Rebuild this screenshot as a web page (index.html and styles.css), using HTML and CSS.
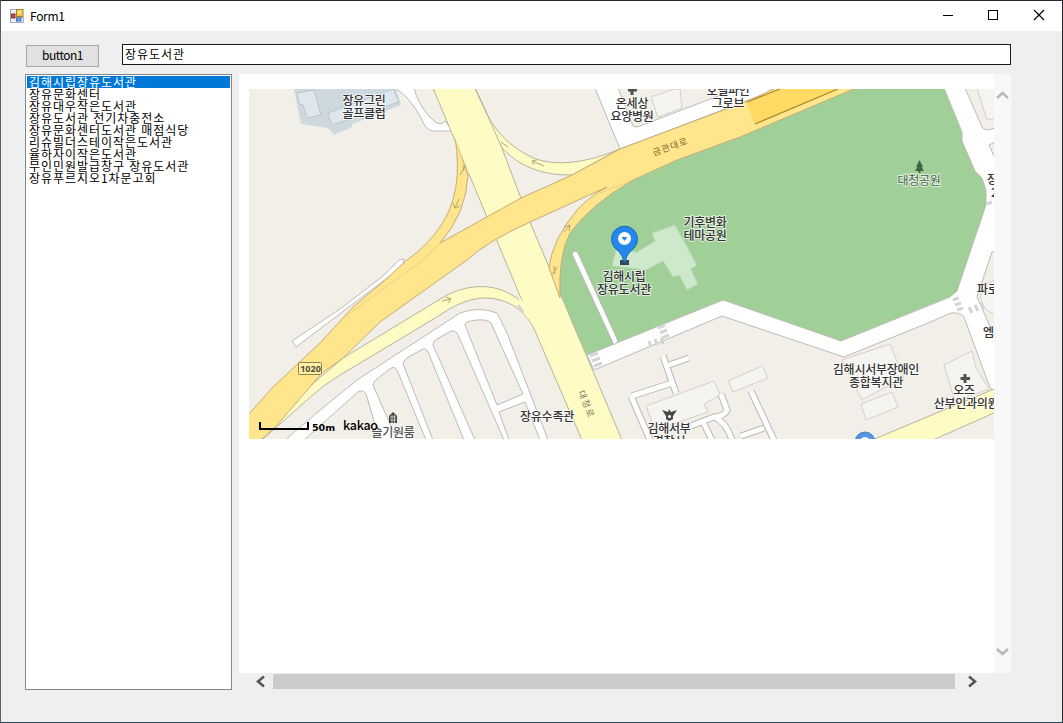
FILE: index.html
```html
<!DOCTYPE html>
<html lang="ko">
<head>
<meta charset="utf-8">
<title>Form1</title>
<link rel="stylesheet" href="styles.css">
</head>
<body>
<main class="window">
  <header class="titlebar">
    <svg class="app-icon" width="14" height="14" viewBox="0 0 14 14">
      <rect x=".5" y=".5" width="6" height="13" fill="#f0f1f4" stroke="#a9adb7"/>
      <rect x="7" y="8.5" width="6.5" height="5" fill="#e8edf5" stroke="#a9b2c4"/>
      <rect x="1.500" y="5" width="3.500" height="4" fill="#b5524e" stroke="#8f2d2b"/>
      <rect x="6.500" y=".5" width="6.500" height="7" fill="#f6ca3d" stroke="#a78423"/>
      <rect x="7.500" y="1.500" width="4" height="3" fill="#ffe58a"/>
      <rect x="6.500" y="9" width="4.500" height="3" fill="#6b9bd8" stroke="#4576b9"/>
    </svg>
    <h1 class="title">Form1</h1>
    <nav class="controls">
      <svg width="46" height="30" viewBox="0 0 46 30"><path class="control-line" d="M19 14.500h10"/></svg>
      <svg width="46" height="30" viewBox="0 0 46 30"><rect class="control-line" x="18.500" y="9.500" width="9" height="9"/></svg>
      <svg width="46" height="30" viewBox="0 0 46 30"><path class="control-line smooth" d="M18 9l10 10M28 9L18 19"/></svg>
    </nav>
  </header>
  <div class="client">
    <div class="searchbar">
      <button class="button">button1</button>
      <input class="query" type="text" value="장유도서관">
    </div>
    <div class="content">
      <ul class="results">
        <li class="selected">김해시립장유도서관</li>
        <li>장유문화센터</li>
        <li>장유대우작은도서관</li>
        <li>장유도서관 전기차충전소</li>
        <li>장유문화센터도서관 매점식당</li>
        <li>리슈빌더스테이작은도서관</li>
        <li>율하자이작은도서관</li>
        <li>무인민원발급창구 장유도서관</li>
        <li>장유푸르지오1차문고회</li>
      </ul>
      <section class="browser">
        <div class="view">
          <div class="page">
            <svg class="map" width="745" height="350" viewBox="249 89 745 350">
              <rect x="249" y="89" width="745" height="350" fill="#f2efe9"/>

              <!-- golf club -->
              <path fill="#cdd8df" d="M294 89H396L401 105 368 118 352 124V127L334 135 328 128 301 124Z"/>
              <path class="blue-building" d="M297 93L314 90 321 115 307 118 303 105 299 104Z"/>
              <path class="blue-building" d="M328 113L393 89 399 102 332 125Z"/>

              <!-- park -->
              <path fill="#a0d098" d="M853 89H944L962 132V141L975 171 982 178 986 190V205L969 257 957 291 950 297 841 341 723 300 587 355 560 298Q558 255 570 233 590 205 633 180L677 160Z"/>
              <path class="pale-building" d="M612 266L616 250 637 252 655 241 652 233 675 225 697 265 691 269 698 284 687 290 679 275 673 277 663 261 646 270Z"/>

              <!-- white roads -->
              <path class="white-road" d="M944 88H995V396L989 385 964 317Q960 312 951 313L928 323 844 357 722 316 594 370 587 355 723 300 841 341 950 297 957 291 986 205V190L982 178 975 171 962 141V132Z"/>
              <path class="block" d="M965 88L982 127Q985 132 995 128V88Z"/>
              <path class="building" d="M977 88L987 120 995 118V88Z"/>
              <path class="block" d="M995 142L989 145 995 158Z"/>
              <path class="block" d="M995 252H992L977 297 995 338Z"/>
              <path class="building" d="M995 280L987 283 980 297 985 309 995 315Z"/>
              <path class="white-road" d="M572 254Q575 249 578 253L618 341 614 345Z"/>
              <path class="white-road" d="M395 88H414Q418 105 431 118 440 128 445 121L453 131H432Q425 129 421 118 410 97 395 88Z"/>
              <path class="white-road" d="M595 88H618L633 126Q635 128 640 126L705 101 770 76 770 92 620 149Z"/>
              <path class="building" d="M651 97L674 89H680L682 108 658 117Z"/>
              <path class="white-road" d="M292 341L340 309 383 276 399 260 404 259 403 266 296 347Z"/>

              <!-- street blocks, lower left -->
              <path class="white-road" d="M285 440L325 406 357 380 460 313Q479 306 497 313L507 333 548 440Z"/>
              <g class="block">
                <path d="M304 440L358 392Q363 389 366 394L374 421 382 440Z"/>
                <path d="M397 440L373 385Q373 382 377 379L391 368Q395 366 397 370L426 440Z"/>
                <path d="M433 440L403 364Q403 361 407 358L421 350Q426 347 428 352L464 440Z"/>
                <path d="M475 440L433 345Q433 341 437 339L451 331Q456 330 458 335L504 440Z"/>
                <path d="M497 405L465 325Q465 321 477 320 487 319 491 323L500 343 523 394Z"/>
                <path d="M509 440L499 412 525 402 540 440Z"/>
              </g>

              <!-- district roads, lower right -->
              <path class="building" d="M646 406L714 381 720 395 704 404 708 412 655 430Z"/>
              <path class="building" d="M728 381L762 366 768 378 733 392Z"/>
              <path class="building" d="M842 360L890 344 904 379 880 390 862 400Z"/>
              <path class="building" d="M861 404L892 392 898 407 866 420Z"/>
              <path class="building" d="M944 365L972 351 976 368 989 389 955 401Z"/>
              <g class="lane-edge"><path d="M663 356L676 393M669 365L689 358M632 396L672 383M631 396L650 440M721 394L727 410Q725 416 714 417L691 426M751 391L774 440M741 436L764 428M703 422L712 440M716 418Q727 424 732 440"/></g>
              <g class="lane"><path d="M663 356L676 393M669 365L689 358M632 396L672 383M631 396L650 440M721 394L727 410Q725 416 714 417L691 426M751 391L774 440M741 436L764 428M703 422L712 440M716 418Q727 424 732 440"/></g>

              <!-- avenue and side ramps -->
              <path class="avenue" d="M262 440L307 400Q323 385 340 375L407 335 440 315Q473 292 500 300 527 307 538 338L582 440H622L530 222 500 143 475 88H433L523 303Q496 279 459 290L447 295 343 358 270 420Z"/>
              <path class="avenue" d="M475 88L490 120Q505 145 533 158 567 171 620 149L572 175Q528 176 502 148Z"/>
              <path class="avenue-fill" d="M474 89L489 120 501 148 503 155 490 130Z"/>
              <path class="avenue-fill" d="M520 298L524 303 537 337 531 322 516 304Z"/>
              <path class="avenue" d="M872 440L994 389H996V412L933 440Z"/>

              <!-- expressway with its slip roads -->
              <path class="expressway" d="M248 415L273 387 320 343 353 307 383 282 407 260Q428 245 440 227 464 193 455 137L468 175Q466 214 440 243L521 198 572 175 620 149 750 100 776 88H856L740 137 677 160 633 180Q590 205 570 233 558 255 560 298L549 268Q552 240 577 210 590 196 607 187L530 222Q486 242 467 260L380 322 343 358 322 373 277 425 261 440H248Z"/>
              <path class="avenue-fill" d="M454 136L469 174 472 173 458 137Z"/>
              <path class="seam" d="M343 318L422 261 440 243M600 193L633 180M343 358L322 373"/>
              <path fill="#ffdb66" d="M746 102L780 89H838L755 124Z"/>
              <path class="overpass" d="M747 102L780 89M755 124L838 89"/>

              <!-- direction marks and crossings -->
              <path class="arrow" d="M459 199L455 208M453 203L455 208 460 206M466 165L460 175M463 165L464 171M544 166L532 161M537 160L532 161 534 165M564 232L570 225M564 227L570 225 569 231M442 301L451 299M446 297L451 299 448 303M508 147L501 142M557 267L552 275M554 266L555 274"/>
              <path class="crossing" d="M590 356L598 353M592 361L600 358M594 366L602 363M658 328L665 325M660 333L667 330M662 338L669 335M649 341L651 347M655 339L657 345M661 338L663 344M953 300L959 298M955 305L961 303M957 310L963 308M969 307L972 313M975 305L978 311M981 303L984 309M518 305L523 312M987 204L992 202"/>

              <!-- labels -->
              <g class="label">
                <text x="364" y="105">장유그린</text><text x="364" y="118">골프클럽</text>
                <text x="632" y="108">온세상</text><text x="632" y="121">요양병원</text>
                <text x="728" y="95">호텔파인</text><text x="728" y="108">그로브</text>
                <text x="705" y="227">기후변화</text><text x="705" y="240">테마공원</text>
                <text x="624" y="281">김해시립</text><text x="624" y="294">장유도서관</text>
                <text x="547" y="421">장유수족관</text>
                <text x="669" y="433">김해서부</text><text x="669" y="446">경찰서</text>
                <text x="876" y="374">김해시서부장애인</text><text x="876" y="387">종합복지관</text>
                <text x="964" y="395">오즈</text><text x="966" y="408">산부인과의원</text>
                <text class="start" x="987" y="184">장</text><text class="start" x="991" y="197">2</text>
                <text class="start" x="977" y="294">파로</text><text class="start" x="983" y="337">엠</text>
                <text class="room" x="393" y="437">슬기원룸</text>
                <text class="park" x="919" y="185">대청공원</text>
              </g>
              <text class="road-name" transform="translate(654 156) rotate(-20)">금관대로</text>
              <text class="avenue-name" transform="translate(578 392) rotate(68)">대청로</text>
              <rect x="298.500" y="362.500" width="23" height="12" rx="1" fill="#fff0a4" stroke="#8d8051"/>
              <text class="route" x="310.500" y="372">1020</text>

              <!-- place icons -->
              <path class="plus" d="M632 89V95M628 90H637M965 374V383M960.500 378.500H970"/>
              <path fill="#3f6244" d="M919.500 160L916 167H917.500L915 171H918.500V173H920.500V171H924L921.500 167H923Z"/>
              <path fill="#444" d="M393 412L397 416V423H389V416Z"/>
              <path stroke="#f2efe9" stroke-width=".7" d="M390 417H396M390 420H396M392 415V423M394.500 415V423"/>
              <path fill="#484848" d="M662 410L668 412 669 409 671 412 677 410 673 416V419L669 421 666 419V416Z"/>
              <circle cx="669.500" cy="416.500" r="1.500" fill="#fff"/>
              <rect x="620" y="260" width="9" height="5" fill="#36465f"/>
              <path fill="#2387ee" stroke="#176aba" d="M624.500 263L622 256Q620 252 615 248A13 13 0 1 1 634 248Q629 252 627 256Z"/>
              <circle cx="624.500" cy="238.500" r="6.500" fill="#fff"/>
              <path fill="#2387ee" d="M621.500 237H627.500L624.500 241Z"/>
              <circle cx="865" cy="442" r="10" fill="#5794e4" stroke="#4b7fc4"/>
              <path fill="none" stroke="#fff" stroke-width="2" d="M861 440Q865 436 869 440"/>

              <path fill="none" stroke="#000" stroke-width="2" d="M260 422V429H308V422"/>
              <text class="scale" x="312" y="431">50m</text>
              <text class="brand" x="343" y="430">kakao</text>
            </svg>
          </div>
          <div class="vscroll">
            <svg width="17" height="17" viewBox="0 0 17 17"><path d="M3 11L8.500 6L14 11"/></svg>
            <svg width="17" height="17" viewBox="0 0 17 17"><path d="M3 6L8.500 11L14 6"/></svg>
          </div>
        </div>
        <div class="hscroll">
          <svg width="17" height="16" viewBox="0 0 17 16"><path d="M12 2.500L6 7.500L12 12.500"/></svg>
          <div class="thumb"></div>
          <svg width="17" height="16" viewBox="0 0 17 16"><path d="M6 2.500L12 7.500L6 12.500"/></svg>
        </div>
      </section>
    </div>
  </div>
</main>
</body>
</html>
```

FILE: styles.css
```css
* { box-sizing: border-box; }
body { margin: 0; font-family: "Noto Sans CJK KR", sans-serif; }
.window {
  width: 1063px; height: 723px; overflow: hidden;
  background: #efefef; border: 1px solid #1f5060;
  border-top-color: #272a2d; border-left-color: #59606a; border-right-color: #24262d;
}
.titlebar { height: 30px; display: flex; align-items: center; padding-left: 9px; background: #fff; }
.title { margin: 0 0 0 6px; font: 400 12px/28px "Noto Sans CJK KR", sans-serif; letter-spacing: -.3px; }
.controls { display: flex; margin-left: auto; }
.control-line { fill: none; stroke: #000; stroke-width: 1; shape-rendering: crispEdges; }
.smooth { shape-rendering: auto; stroke-width: 1.2; }
.client { padding: 13px 51px 33px 24px; }
.searchbar { display: flex; height: 21px; }
.button {
  width: 73px; height: 22px; margin: 1px 0 0 1px; padding: 0 0 2px;
  background: #e1e1e1; border: 1px solid #a7a7a7; color: #000;
  font: 12px/18px "Noto Sans CJK KR", sans-serif; letter-spacing: -.5px;
}
.query {
  width: 889px; height: 21px; margin-left: 23px; padding: 0 2px 3px;
  border: 1px solid #1b1b1d; border-radius: 0; outline: 0; background: #fff; color: #000;
  font: 12px/16px "Noto Sans CJK KR", sans-serif; letter-spacing: .95px;
}
.content { display: flex; gap: 7px; margin-top: 9px; }
.results {
  width: 207px; height: 616px; margin: 0; padding: 1px;
  list-style: none; background: #fff; border: 1px solid #828790;
  font-size: 12px; line-height: 11px; letter-spacing: .95px;
}
.results li { height: 12px; padding-left: 2px; white-space: nowrap; }
.results .selected { color: #fff; background: #0078d7; }
.browser { width: 772px; }
.view { display: flex; height: 599px; background: #fff; }
.page { width: 755px; padding: 15px 0 0 10px; }
.map { display: block; }
.vscroll {
  width: 17px; display: flex; flex-direction: column; justify-content: space-between;
  padding: 13px 0; background: #f8f8f8;
}
.vscroll path, .hscroll path { fill: none; stroke-width: 2.5; }
.vscroll path { stroke: #b9b9b9; }
.hscroll { display: flex; height: 17px; padding: 1px 30px 0 13px; }
.hscroll path { stroke: #555; }
.thumb { width: 682px; height: 15px; margin: 0 8px 0 4px; background: #cbcbcb; }

.blue-building { fill: #dfe7ed; stroke: #b9c6d0; }
.pale-building { fill: #cde8ca; stroke: #b5d8b0; }
.building { fill: #f6f4f0; stroke: #d3d0cc; }
.white-road { fill: #fff; stroke: #bdbab7; }
.block { fill: #f2efe9; stroke: #bdbab7; }
.lane, .lane-edge { fill: none; stroke-linejoin: round; }
.lane-edge { stroke: #bbb8b5; stroke-width: 7; }
.lane { stroke: #fff; stroke-width: 5; }
.avenue { fill: #fffbc4; stroke: #b8b49a; }
.avenue-fill { fill: #fffbc4; }
.expressway { fill: #ffe68c; stroke: #c7ab75; stroke-linejoin: round; }
.seam { fill: none; stroke: #dfc581; stroke-width: .7; }
.overpass { stroke: #b18a2d; stroke-width: 1.3; }
.arrow { fill: none; stroke: #b4a477; }
.crossing { stroke: #d5d5d5; stroke-width: 3; }
.label {
  font-size: 12px; font-weight: 500; fill: #333; text-anchor: middle;
  letter-spacing: -.25px; paint-order: stroke; stroke: #ffffffb0; stroke-width: 2px; stroke-linejoin: round;
}
.start { text-anchor: start; }
.park { fill: #456347; font-weight: 400; }
.room { fill: #555; }
.road-name, .avenue-name { fill: #80642b; font-size: 9px; letter-spacing: 1px; }
.avenue-name { fill: #777258; letter-spacing: 1.5px; }
.route { font: bold 9px "Noto Sans", sans-serif; text-anchor: middle; fill: #504b3f; }
.plus { stroke: #505050; stroke-width: 3; }
.scale { font: bold 9.500px "DejaVu Sans", sans-serif; fill: #000; }
.brand { font: 500 12.500px "Noto Sans CJK KR", sans-serif; fill: #000; letter-spacing: -.3px; }
```
